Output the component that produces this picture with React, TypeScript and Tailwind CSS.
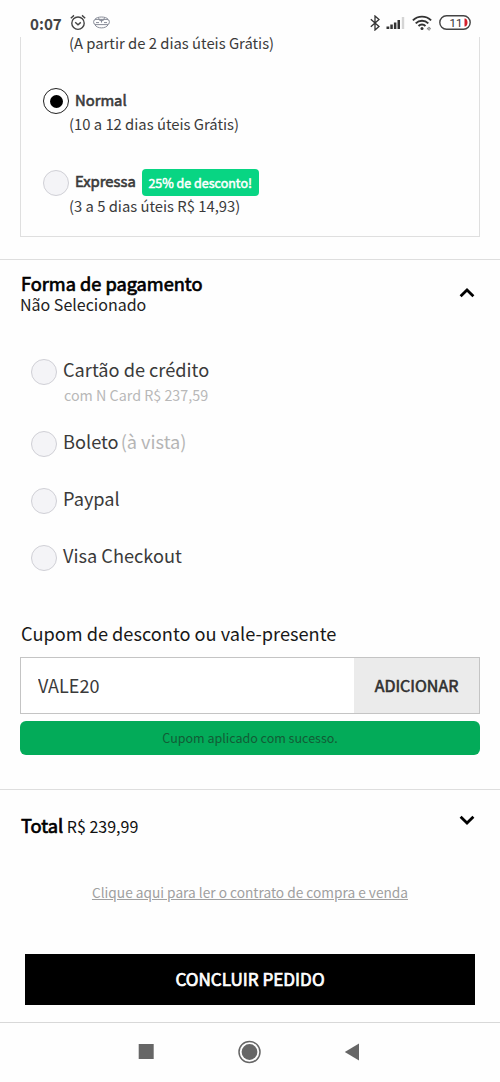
import { useState } from "react";

const PAGAMENTOS = [
  { id: "cartao", label: "Cartão de crédito", obs: "", detalhe: "com N Card R$ 237,59" },
  { id: "boleto", label: "Boleto", obs: "(à vista)", detalhe: "" },
  { id: "paypal", label: "Paypal", obs: "", detalhe: "" },
  { id: "visa", label: "Visa Checkout", obs: "", detalhe: "" },
];

function Radio({ checked, onClick }: { checked: boolean; onClick: () => void }) {
  return (
    <button
      role="radio"
      aria-checked={checked}
      onClick={onClick}
      className={`flex size-[26px] shrink-0 items-center justify-center rounded-full border ${
        checked ? "border-[#222] bg-white" : "border-[#d0d0d6] bg-[#f4f4f7]"
      }`}
    >
      {checked && <span className="size-[13px] rounded-full bg-black" />}
    </button>
  );
}

function Chevron({ up }: { up?: boolean }) {
  return (
    <svg width="16" height="10" viewBox="0 0 16 10" fill="none" stroke="#000" strokeWidth="2.8">
      <path d={up ? "M1.6 8.2 8 2l6.4 6.2" : "M1.6 1.8 8 8l6.4-6.2"} />
    </svg>
  );
}

function StatusBar() {
  return (
    <header className="flex h-[37px] items-center pt-[8px] pr-[29px] pl-[30px] text-[#444]">
      <span className="w-[40px] text-[15.2px] leading-5 font-bold whitespace-nowrap">0:07</span>
      <svg width="16" height="17" viewBox="0 0 16 17" fill="none" stroke="#444" strokeWidth="1.4">
        <circle cx="8" cy="9.2" r="6.2" />
        <path d="M5.2 8.2 8 10.8l2.8-2.4M.8 4.2 4 1.4M15.2 4.2 12 1.4" />
      </svg>
      <svg className="ml-[7px]" width="17" height="13" viewBox="0 0 17 13" fill="none" stroke="#888c98" strokeWidth="1">
        <rect x=".6" y="3.4" width="15.8" height="5.2" rx="2.4" />
        <path d="M1.8 3.4C4 .2 13 .2 15.2 3.4M1.8 8.6C4 13 13 13 15.2 8.6M5.4 1.6l1.4 3h3.4l1.4-3M3 6.6h3M11 6.6h3M8.5 3.6v3" />
      </svg>
      <div className="ml-auto flex items-center">
        <svg width="10" height="16" viewBox="0 0 10 16" fill="none" stroke="#333" strokeWidth="1.3">
          <path d="M.8 4.2 9 11.4 5 15V1l4 3.6L.8 11.8" />
        </svg>
        <svg className="ml-[6px]" width="19" height="13" viewBox="0 0 19 13" fill="#333">
          <path d="M.5 10.5h2.8V13H.5zM4.3 8.6h2.5V13H4.3zM7.9 6.4h2.5V13H7.9zM11.5 4h2.5v9h-2.5z" />
          <path d="M15.8 1h2.4v12h-2.4z" fill="#d5d5d5" />
        </svg>
        <svg className="ml-[7px]" width="20" height="16" viewBox="0 0 20 16" fill="none" stroke="#333" strokeWidth="1.9">
          <path d="M.9 5.4c5-5 13.2-5 18.2 0M3.7 8.3c3.5-3.5 9.1-3.5 12.6 0M6.5 11c2-2 5-2 7 0" />
          <circle cx="10" cy="13.4" r="1.5" fill="#333" stroke="none" />
          <path d="M15.2 14.2c0-2.4 3.4-2.4 3.2-.4h-2.6c.2 1.5 1.8 1.4 2.4.7" stroke="#777" strokeWidth=".9" />
        </svg>
        <svg className="ml-[7px]" width="32" height="15" viewBox="0 0 32 15">
          <rect x=".8" y=".8" width="30.4" height="13.4" rx="6.7" fill="#fff" stroke="#444" strokeWidth="1.4" />
          <path d="M25.5 3.5c4-.6 4 8.6 0 8z" fill="#d3202c" />
          <text x="10.5" y="11.6" fontSize="11.5" fill="#333" fontFamily="Roboto, sans-serif">
            11
          </text>
        </svg>
      </div>
    </header>
  );
}

export default function App() {
  const [frete, setFrete] = useState("normal");
  const [pagamento, setPagamento] = useState("");
  const [cupom, setCupom] = useState("VALE20");

  return (
    <div className="flex h-[1082px] w-[500px] flex-col overflow-hidden bg-[#fefefe] font-['Noto_Sans_CJK_SC','Noto_Sans',sans-serif] text-[#3a3a3a]">
      <StatusBar />

      {/* Opções de entrega */}
      <section className="mx-5 h-[200px] border border-t-0 border-[#dfdfdf] pl-[22px] text-[14.8px] leading-5">
        <p className="-mt-[4px] pl-[26px]">(A partir de 2 dias úteis Grátis)</p>
        <div className="mt-[35px] flex h-[26px] items-center gap-[6px]">
          <Radio checked={frete === "normal"} onClick={() => setFrete("normal")} />
          <span className="pb-[3px] [-webkit-text-stroke:0.6px]">Normal</span>
        </div>
        <p className="pl-[26px]">(10 a 12 dias úteis Grátis)</p>
        <div className="mt-[35px] flex h-[27px] items-center">
          <Radio checked={frete === "expressa"} onClick={() => setFrete("expressa")} />
          <span className="ml-[6px] pb-[3px] [-webkit-text-stroke:0.6px]">Expressa</span>
          <span className="ml-[6px] h-[27px] w-[117px] rounded-[4px] bg-[#08d583] text-center text-[12.5px] leading-[27px] text-white [-webkit-text-stroke:0.5px]">
            25% de desconto!
          </span>
        </div>
        <p className="pl-[26px]">(3 a 5 dias úteis R$ 14,93)</p>
      </section>

      {/* Forma de pagamento */}
      <section className="mt-[22px] h-[530px] border-t border-[#dedede] px-5">
        <div className="flex items-start justify-between pt-[11px] pr-[5px]">
          <div className="text-[#222]">
            <h2 className="pl-px text-[18.2px] leading-6 text-black [-webkit-text-stroke:0.7px]">Forma de pagamento</h2>
            <p className="-mt-px text-[16px] leading-5">Não Selecionado</p>
          </div>
          <div className="mt-[17px]">
            <Chevron up />
          </div>
        </div>

        <div className="mt-[45px] ml-[11px] flex flex-col">
          {PAGAMENTOS.map((p) => (
            <div key={p.id} className={p.detalhe ? "h-[72px]" : "h-[57px]"}>
              <div className="flex h-[26px] items-center gap-[6px]">
                <Radio checked={pagamento === p.id} onClick={() => setPagamento(p.id)} />
                <span className="pb-[6px] text-[18.2px] leading-6">
                  {p.label}
                  {p.obs && <span className="ml-[2px] text-[#b5b5b5]">{p.obs}</span>}
                </span>
              </div>
              {p.detalhe && <p className="pl-[33px] text-[14.3px] leading-5 text-[#b8b8b8]">{p.detalhe}</p>}
            </div>
          ))}
        </div>

        <label className="mt-[19px] block pl-px text-[18.2px] leading-6 text-[#181818]">
          Cupom de desconto ou vale-presente
        </label>
        <div className="mt-[12px] flex h-[57px] border border-[#c4c4c4]">
          <input
            value={cupom}
            onChange={(e) => setCupom(e.target.value)}
            className="min-w-0 flex-1 bg-white pl-[17px] text-[18px] outline-none"
          />
          <button className="w-[125px] bg-[#ebebeb] pb-px text-[16px] text-[#303030] [-webkit-text-stroke:0.6px]">
            ADICIONAR
          </button>
        </div>
        <div className="mt-[7px] h-[34px] rounded-[6px] bg-[#03ab59] text-center text-[12.5px] leading-[34px] text-[#125c36]">
          Cupom aplicado com sucesso.
        </div>
      </section>

      {/* Total */}
      <section className="flex h-[72px] items-start justify-between border-t border-[#dedede] pr-[25px] pl-[21px] text-[#111]">
        <p className="mt-[23px] text-[16px] leading-6">
          <span className="text-[18.3px] text-black [-webkit-text-stroke:0.7px]">Total</span> R$ 239,99
        </p>
        <div className="mt-[25px]">
          <Chevron />
        </div>
      </section>
      <a className="mt-[21px] self-center text-[13.7px] leading-5 text-[#a0a0a0] underline">
        Clique aqui para ler o contrato de compra e venda
      </a>
      <button className="mx-[25px] mt-[52px] h-[51px] bg-black pb-[2px] text-[17.1px] text-white [-webkit-text-stroke:0.7px]">
        CONCLUIR PEDIDO
      </button>

      {/* Barra de navegação do sistema */}
      <nav className="mt-[17px] flex flex-1 justify-between border-t border-[#d8d8d8] pt-[17px] pr-[140px] pl-[138px]">
        <svg width="16" height="22" viewBox="0 0 16 22">
          <path d="M.7 4h15v15H.7z" fill="#666" />
        </svg>
        <svg width="24" height="24" viewBox="0 0 24 24">
          <circle cx="12.5" cy="12" r="10.5" fill="none" stroke="#666" strokeWidth="1.5" />
          <circle cx="12.5" cy="12" r="7.9" fill="#666" />
        </svg>
        <svg width="16" height="22" viewBox="0 0 16 22">
          <path d="M.8 12 15 3.5v17z" fill="#666" />
        </svg>
      </nav>
    </div>
  );
}
